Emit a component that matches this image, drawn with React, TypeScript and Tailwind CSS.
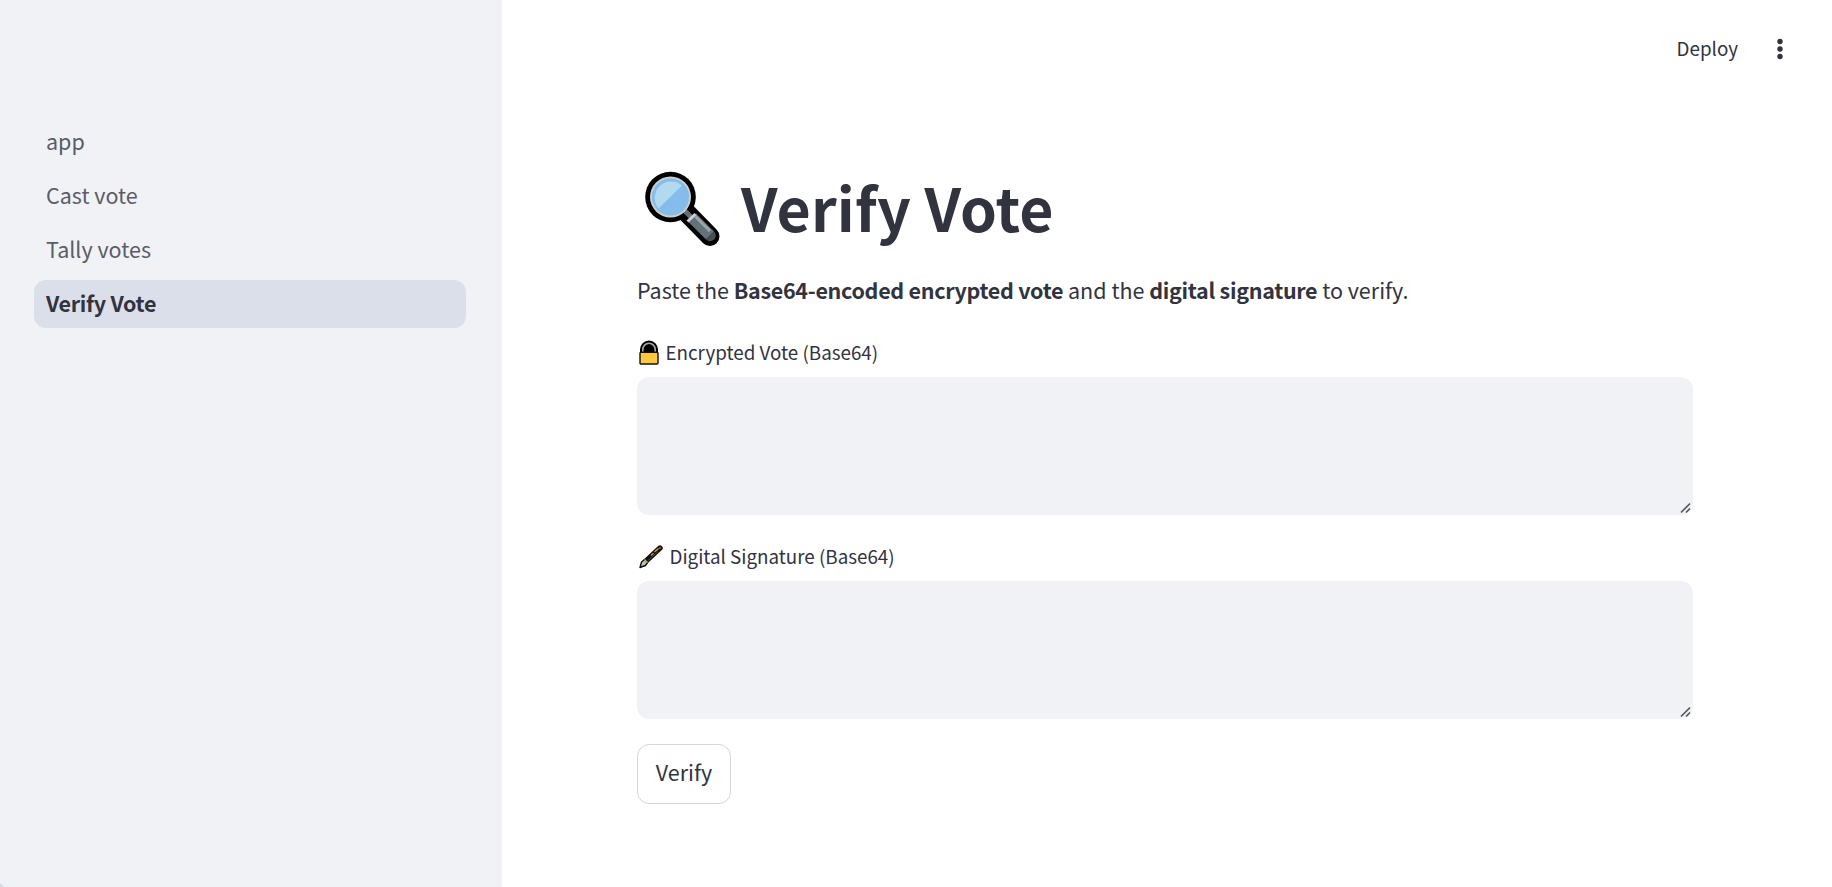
import React from "react";

const pages = ["app", "Cast vote", "Tally votes", "Verify Vote"];

function MagnifierIcon() {
  return (
    <svg className="-ml-[2px] h-[95px] w-[95px] shrink-0" viewBox="0 0 95 95" aria-hidden="true">
      <path d="M51 52 L75 76.5" stroke="#000" strokeWidth="19" strokeLinecap="round" />
      <circle cx="35.5" cy="37" r="25.3" fill="#000" />
      <path d="M49 50 L58 59" stroke="#637278" strokeWidth="5" />
      <path d="M57 57.500 L75 75.500" stroke="#637278" strokeWidth="11.500" />
      <path d="M71 79.600 L79.100 71.500 A5.700 5.700 0 0 1 71 79.600 Z" fill="#454f54" />
      <path d="M60.500 56.500 L75 71" stroke="#9aa8ae" strokeWidth="3" />
      <path d="M52.500 61.500 L60.500 54" stroke="#d0d0d0" strokeWidth="3" />
      <circle cx="35.500" cy="37" r="20.500" fill="#d0cfce" />
      <circle cx="35.500" cy="37" r="18.600" fill="#84bdeb" />
      <path d="M23.500 48.500 A16.500 16.500 0 0 1 47 25.500 Z" fill="#b1daf1" />
    </svg>
  );
}

function LockIcon() {
  return (
    <svg className="h-[26px] w-[24px] shrink-0" viewBox="0 0 24 26" aria-hidden="true">
      <path d="M4 13 V9.500 a8 8 0 0 1 16 0 V13 Z" fill="#000" stroke="#000" strokeWidth="2" />
      <path d="M5.800 13 V9.500 a6.200 6.200 0 0 1 12.400 0 V13" fill="#000" stroke="#a9a9a9" strokeWidth="1.600" />
      <rect x="3" y="12.300" width="18" height="11.700" rx="1" fill="#ffc83d" stroke="#111" strokeWidth="1.400" />
    </svg>
  );
}

function PenIcon() {
  return (
    <svg className="h-[26px] w-[28px] shrink-0" viewBox="0 0 28 26" aria-hidden="true">
      <path d="M8.500 17.500 L23 4" stroke="#111" strokeWidth="5.400" strokeLinecap="round" />
      <path d="M3 23.500 L4.500 18 L7.500 15.500 L10.500 18.500 L8.500 21.500 Z" fill="#b9bfc2" stroke="#111" strokeWidth="1.400" strokeLinejoin="round" />
      <path d="M7.500 15.500 L10.500 18.500" stroke="#e5b13a" strokeWidth="1.300" />
      <path d="M14 11.500 L16.500 9.300 M17.500 8 L21.500 4.500 M22.500 3.500 L23.500 4.500" stroke="#d99b1c" strokeWidth="1.500" />
      <path d="M11 16.500 L21 7.500" stroke="#4a4a4a" strokeWidth="1" />
    </svg>
  );
}

function Field({ icon, label }: { icon: React.ReactNode; label: string }) {
  return (
    <div className="flex flex-col">
      <label className="flex h-[36px] items-center">
        {icon}
        <span className="ml-[4.5px] pb-[2px] text-[18.8px] leading-[30px]">{label}</span>
      </label>
      <div className="relative mt-[6px] h-[138px]">
        <textarea aria-label={label} className="block h-full w-full resize-none rounded-xl bg-[#f0f2f6] p-4 outline-none" />
        <svg className="pointer-events-none absolute right-[1px] bottom-[1px] h-[12px] w-[12px]" viewBox="0 0 12 12" aria-hidden="true">
          <path d="M1 10.500 L10 1.500 M6 10.500 L10 6.500" stroke="#56585c" strokeWidth="1.700" />
        </svg>
      </div>
    </div>
  );
}

export default function App() {
  return (
    <div className="flex h-[887px] w-full overflow-hidden bg-white font-['Noto_Sans_CJK_SC',sans-serif] text-[#31333f]">
      <aside className="relative w-[502px] shrink-0 bg-[#f0f2f6] px-[34px] pt-[118px]">
        <nav className="flex w-[432px] flex-col gap-[6px]">
          {pages.map((p) => (
            <a
              key={p}
              className={
                p === "Verify Vote"
                  ? "flex h-12 items-center rounded-xl bg-[#dbdfe9] px-3 pb-[2px] text-[21.5px] leading-[36px] font-semibold tracking-[-0.3px]"
                  : "flex h-12 items-center rounded-xl px-3 pb-[2px] text-[21.5px] leading-[36px] text-[#5a5c67]"
              }
            >
              {p}
            </a>
          ))}
        </nav>
        <span className="absolute bottom-0 left-0 h-[4px] w-[5px] bg-[#d5dfe8] [clip-path:polygon(0_0,100%_100%,0_100%)]" />
      </aside>
      <main className="flex flex-1 flex-col">
        <header className="flex h-[98px] items-center justify-end gap-[34px] pr-[44px]">
          <button className="pb-[2px] text-[18.8px] leading-[30px]">Deploy</button>
          <svg className="h-6 w-4" viewBox="0 0 16 24" fill="#31333f" aria-label="Menu">
            <circle cx="8" cy="4.500" r="2.700" />
            <circle cx="8" cy="12" r="2.700" />
            <circle cx="8" cy="19.500" r="2.700" />
          </svg>
        </header>
        <section className="ml-[135px] flex w-[1056px] flex-col pt-[62px]">
          <h1 className="flex h-[95px] items-center text-[59px] leading-[80px] font-bold">
            <MagnifierIcon />
            <span className="ml-[11px] pb-[2px] tracking-[0.15px]">Verify Vote</span>
          </h1>
          <p className="mt-[17px] h-[36px] text-[21.5px] leading-[36px]">
            Paste the <strong className="font-semibold tracking-[-0.3px]">Base64-encoded encrypted vote</strong> and the{" "}
            <strong className="font-semibold tracking-[-0.3px]">digital signature</strong> to verify.
          </p>
          <div className="mt-[27px] flex flex-col gap-[24px]">
            <Field icon={<LockIcon />} label="Encrypted Vote (Base64)" />
            <Field icon={<PenIcon />} label="Digital Signature (Base64)" />
          </div>
          <button className="mt-[25px] flex h-[60px] w-[94px] items-center justify-center rounded-xl border border-[#d6d6d9] pb-[4px] text-[21.5px] leading-[36px]">
            Verify
          </button>
        </section>
      </main>
    </div>
  );
}
